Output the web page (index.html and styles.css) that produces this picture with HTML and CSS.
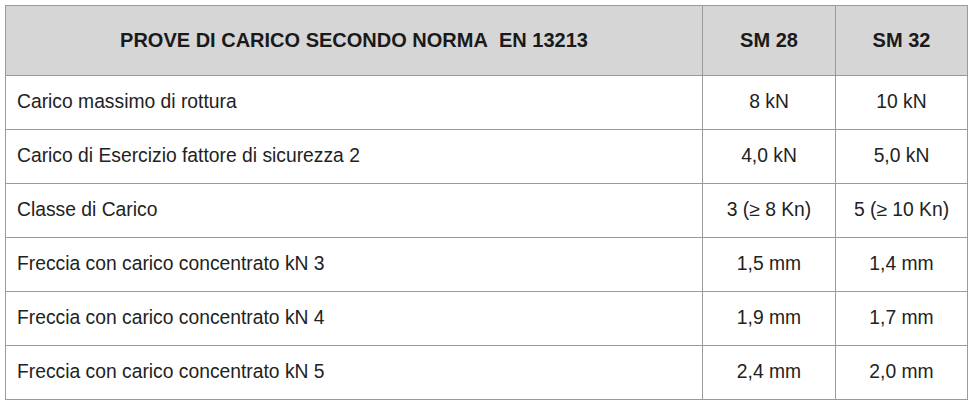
FILE: index.html
```html
<!DOCTYPE html>
<html lang="it">
<head>
<meta charset="utf-8">
<title>Prove di carico</title>
<link rel="stylesheet" href="styles.css">
</head>
<body>
<table class="spec">
  <colgroup>
    <col class="c-label">
    <col class="c-val">
    <col class="c-val2">
  </colgroup>
  <thead>
    <tr>
      <th>PROVE DI CARICO SECONDO NORMA&nbsp; EN 13213</th>
      <th>SM 28</th>
      <th>SM 32</th>
    </tr>
  </thead>
  <tbody>
    <tr><td class="label">Carico massimo di rottura</td><td>8 kN</td><td>10 kN</td></tr>
    <tr><td class="label">Carico di Esercizio fattore di sicurezza 2</td><td>4,0 kN</td><td>5,0 kN</td></tr>
    <tr><td class="label">Classe di Carico</td><td>3 (≥ 8 Kn)</td><td>5 (≥ 10 Kn)</td></tr>
    <tr><td class="label">Freccia con carico concentrato kN 3</td><td>1,5 mm</td><td>1,4 mm</td></tr>
    <tr><td class="label">Freccia con carico concentrato kN 4</td><td>1,9 mm</td><td>1,7 mm</td></tr>
    <tr><td class="label">Freccia con carico concentrato kN 5</td><td>2,4 mm</td><td>2,0 mm</td></tr>
  </tbody>
</table>
</body>
</html>
```
FILE: styles.css
```css
html, body {
  margin: 0;
  padding: 0;
  background: #ffffff;
}
body {
  padding: 5px 0 0 5px;
  font-family: "Liberation Sans", Arial, sans-serif;
  color: #222222;
}
.spec {
  border-collapse: collapse;
  table-layout: fixed;
  width: 962px;
}
.c-label { width: 697px; }
.c-val { width: 133px; }
.c-val2 { width: 132px; }
.spec th, .spec td {
  border: 1.5px solid #9a9a9a;
  text-align: center;
  vertical-align: middle;
  padding: 0;
  font-size: 19.3px;
  line-height: 1.15;
}
.spec th {
  height: 68.5px;
  background: #d6d6d6;
  font-weight: bold;
  font-size: 20px;
  color: #1a1a1a;
}
.spec td {
  height: 52px;
  padding-top: 1px;
  font-weight: normal;
}
.spec td.label {
  text-align: left;
  padding-left: 11px;
}
```
